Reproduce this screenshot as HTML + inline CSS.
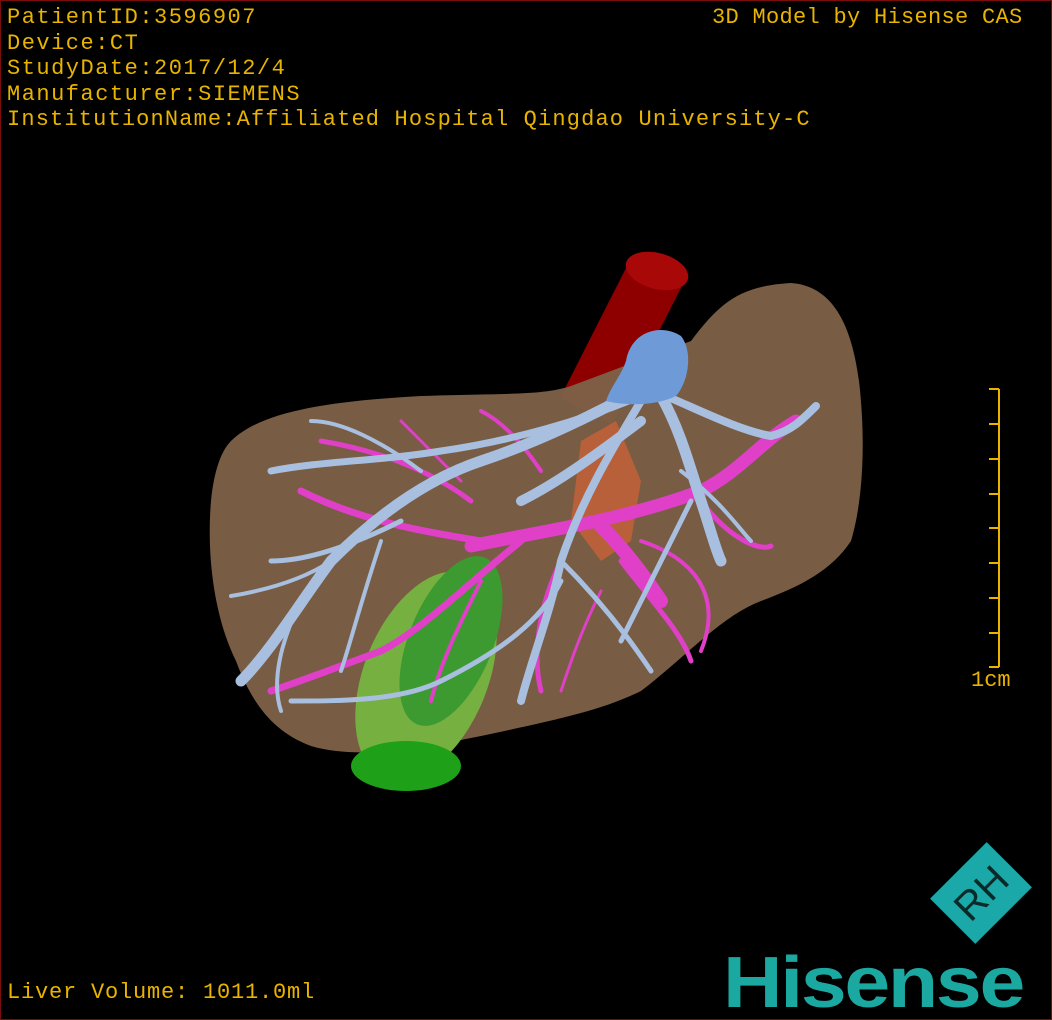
<!DOCTYPE html>
<html><head><meta charset="utf-8"><style>
html,body{margin:0;padding:0;background:#000;}
#wrap{position:relative;width:1050px;height:1018px;border:1px solid #7a0c0c;background:#000;overflow:hidden;}
.t{position:absolute;font-family:"Liberation Mono",monospace;font-size:22px;color:#e8b400;letter-spacing:1.5px;white-space:nowrap;line-height:25px;}
</style></head><body><div id="wrap">
<svg width="1050" height="1018" style="position:absolute;left:0;top:0">
<line x1="655" y1="272" x2="585" y2="410" stroke="#8e0000" stroke-width="58"/>
<ellipse cx="656" cy="270" rx="32" ry="18" fill="#a80808" transform="rotate(15 656 270)"/>
<path d="M230,440 C260,410 330,400 420,395 C500,392 540,395 570,385 L690,340 C720,300 740,285 790,282 C830,285 850,320 858,380 C865,440 862,500 850,540 C830,570 800,585 760,600 C720,615 680,660 640,690 C600,710 550,720 480,735 C430,745 360,760 310,745 C270,730 250,700 235,660 C215,620 205,560 210,500 C213,470 220,450 230,440Z" fill="#7e6148" fill-opacity="0.95"/>
<path d="M580,440 L615,420 L640,480 L630,540 L600,560 L570,520 Z" fill="#b8603a"/>
<ellipse cx="425" cy="675" rx="62" ry="110" fill="#76b040" transform="rotate(22 425 675)"/>
<ellipse cx="450" cy="640" rx="42" ry="90" fill="#3d9a30" transform="rotate(22 450 640)"/>
<ellipse cx="405" cy="765" rx="55" ry="25" fill="#1ea018"/>
<g stroke="#e040c8" fill="none" stroke-linecap="round">
<path d="M470,545 C540,530 620,520 700,490 C740,470 760,440 795,420" stroke-width="13"/>
<path d="M600,525 C620,545 640,570 660,600" stroke-width="14"/>
<path d="M520,540 C470,580 420,630 380,650 C340,665 300,680 270,690" stroke-width="7"/>
<path d="M480,540 C420,530 360,520 300,490" stroke-width="7"/>
<path d="M470,500 C430,470 380,450 320,440" stroke-width="5"/>
<path d="M560,560 C540,600 530,650 540,690" stroke-width="5"/>
<path d="M620,560 C650,600 680,630 690,660" stroke-width="5"/>
<path d="M700,500 C730,540 760,550 770,545" stroke-width="5"/>
<path d="M480,580 C460,620 440,660 430,700" stroke-width="4"/>
<path d="M640,540 C700,560 720,600 700,650" stroke-width="4"/>
<path d="M540,470 C520,440 500,420 480,410" stroke-width="4"/>
<path d="M400,420 C420,440 440,460 460,480" stroke-width="3"/>
<path d="M600,590 C580,630 570,660 560,690" stroke-width="3"/>
</g>
<g stroke="#a8bfe0" fill="none" stroke-linecap="round">
<path d="M645,385 C600,410 540,440 480,460 C420,480 370,520 330,560 C300,600 270,650 240,680" stroke-width="11"/>
<path d="M640,395 C580,420 510,440 440,450 C380,460 320,460 270,470" stroke-width="7"/>
<path d="M660,395 C680,430 690,470 700,500 C710,530 715,550 720,560" stroke-width="11"/>
<path d="M665,395 C700,410 740,430 770,435 C790,430 800,420 815,405" stroke-width="8"/>
<path d="M640,400 C610,450 580,500 560,560 C550,610 530,660 520,700" stroke-width="8"/>
<path d="M560,560 C600,600 630,640 650,670" stroke-width="5"/>
<path d="M560,580 C540,620 500,650 440,680 C400,700 340,700 290,700" stroke-width="5"/>
<path d="M400,520 C360,540 310,560 270,560" stroke-width="5"/>
<path d="M330,560 C300,580 260,590 230,595" stroke-width="4"/>
<path d="M420,470 C380,440 340,420 310,420" stroke-width="4"/>
<path d="M680,470 C720,500 740,530 750,540" stroke-width="4"/>
<path d="M690,500 C660,560 640,600 620,640" stroke-width="5"/>
<path d="M300,600 C280,640 270,680 280,710" stroke-width="4"/>
<path d="M380,540 C360,600 350,640 340,670" stroke-width="4"/>
<path d="M640,420 C600,450 560,480 520,500" stroke-width="10"/>
</g>
<path d="M625,360 C630,330 660,322 680,335 C692,350 688,380 675,395 C655,405 625,405 605,400 C610,385 620,375 625,360Z" fill="#6f9ad8"/>
<g stroke="#e8b400" stroke-width="2">
<line x1="998" y1="388" x2="998" y2="666"/>
<line x1="988" y1="388" x2="998" y2="388"/>
<line x1="988" y1="423" x2="998" y2="423"/>
<line x1="988" y1="458" x2="998" y2="458"/>
<line x1="988" y1="493" x2="998" y2="493"/>
<line x1="988" y1="527" x2="998" y2="527"/>
<line x1="988" y1="562" x2="998" y2="562"/>
<line x1="988" y1="597" x2="998" y2="597"/>
<line x1="988" y1="632" x2="998" y2="632"/>
<line x1="988" y1="666" x2="998" y2="666"/>
</g>
<g transform="translate(980,892) rotate(-45)">
<rect x="-40" y="-32" width="80" height="64" fill="#1aa8a8"/>
<text x="0" y="14" text-anchor="middle" font-family="Liberation Sans,sans-serif" font-size="40" fill="#0a2a2a">RH</text>
</g>
<text x="722" y="1006" font-family="Liberation Sans,sans-serif" font-weight="bold" font-size="72" fill="#1aa8a0" letter-spacing="-2" textLength="300" lengthAdjust="spacingAndGlyphs">Hisense</text>
</svg>
<div class="t" style="left:6px;top:4px">PatientID:3596907</div>
<div class="t" style="left:6px;top:30px">Device:CT</div>
<div class="t" style="left:6px;top:55px">StudyDate:2017/12/4</div>
<div class="t" style="left:6px;top:81px">Manufacturer:SIEMENS</div>
<div class="t" style="left:6px;top:106px;letter-spacing:1.15px">InstitutionName:Affiliated Hospital Qingdao University-C</div>
<div class="t" style="left:711px;top:4px;letter-spacing:0.3px">3D Model by Hisense CAS</div>
<div class="t" style="left:970px;top:667px;letter-spacing:0">1cm</div>
<div class="t" style="left:6px;top:979px;letter-spacing:0.8px">Liver Volume: 1011.0ml</div>
</div></body></html>
